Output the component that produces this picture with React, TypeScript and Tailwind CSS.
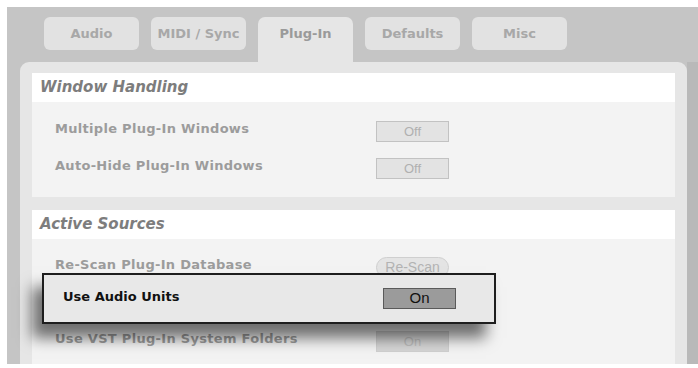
const tabs = ['Audio', 'MIDI / Sync', 'Plug-In', 'Defaults', 'Misc'];

function Toggle({ label, dim }: { label: string; dim?: boolean }) {
  return (
    <div
      className={
        'w-[73px] h-[21px] flex items-center justify-center border text-[13px] ' +
        (dim ? 'bg-[#d6d6d6] border-[#d0d0d0] text-[#bdbdbd]' : 'bg-[#e3e3e3] border-[#c2c2c2] text-[#b0b0b0]')
      }
    >
      {label}
    </div>
  );
}

function Row({ label, children }: { label: string; children: React.ReactNode }) {
  return (
    <div className="flex items-center h-[21px]">
      <div className="w-[321px] text-[13px] font-bold text-[#9c9c9c] font-['DejaVu_Sans',sans-serif] tracking-[0.3px] -mt-[5px]">
        {label}
      </div>
      {children}
    </div>
  );
}

function SectionHeader({ title }: { title: string }) {
  return (
    <div className="bg-white h-[29px] flex items-center pl-[8px] text-[15px] font-bold italic text-[#7d7d7d] font-['DejaVu_Sans',sans-serif]">
      {title}
    </div>
  );
}

export default function App() {
  return (
    <div className="w-[698px] h-[368px] bg-white pt-[7px] pl-[7px] font-['Liberation_Sans',Arial,sans-serif] overflow-hidden">
      <div className="h-[357px] bg-[#c5c5c5] flex flex-col">
        {/* tabs */}
        <div className="flex items-start gap-[12px] pl-[37px] pt-[10px] h-[55px] font-['DejaVu_Sans',sans-serif]">
          {tabs.map((t) => {
            const active = t === 'Plug-In';
            return (
              <div
                key={t}
                className={
                  'w-[95px] flex justify-center text-[13px] font-bold ' +
                  (active
                    ? 'h-[45px] bg-[#e6e6e6] rounded-t-[7px] pt-[7px] text-[#9a9a9a]'
                    : 'h-[33px] bg-[#e2e2e2] rounded-[6px] items-center text-[#a8a8a8]')
                }
              >
                {t}
              </div>
            );
          })}
        </div>

        {/* panel */}
        <div className="flex flex-1">
          <div className="relative ml-[13px] w-[667px] bg-[#e6e6e6] rounded-t-[9px] px-[12px] pt-[11px] flex flex-col">
            <SectionHeader title="Window Handling" />
            <div className="bg-[#f3f3f3] h-[95px] pl-[23px] pt-[19px] flex flex-col gap-[16px]">
              <Row label="Multiple Plug-In Windows">
                <Toggle label="Off" />
              </Row>
              <Row label="Auto-Hide Plug-In Windows">
                <Toggle label="Off" />
              </Row>
            </div>

            <div className="h-[13px]" />
            <SectionHeader title="Active Sources" />
            <div className="bg-[#f3f3f3] flex-1 pl-[23px] pt-[18px] flex flex-col gap-[16px]">
              <Row label="Re-Scan Plug-In Database">
                <div className="w-[73px] h-[21px] rounded-full border border-[#cfcfcf] bg-[#e4e4e4] text-[#b3b3b3] text-[14px] flex items-center justify-center">
                  Re-Scan
                </div>
              </Row>
              {/* row behind the callout */}
              <div className="h-[21px]" />
              <Row label="Use VST Plug-In System Folders">
                <Toggle label="On" dim />
              </Row>
            </div>

            {/* highlighted callout */}
            <div className="absolute left-[22px] top-[211px] w-[454px] h-[51px] bg-[#e8e8e8] border-2 border-[#1e1e1e] shadow-[-10px_14px_14px_rgba(0,0,0,0.55)] flex items-center pl-[19px]">
              <div className="w-[320px] text-[13px] font-bold text-[#111] font-['DejaVu_Sans',sans-serif] -mt-[3px]">
                Use Audio Units
              </div>
              <div className="w-[73px] h-[21px] bg-[#9b9b9b] border border-[#5a5a5a] flex items-center justify-center text-[15px] text-[#111]">
                On
              </div>
            </div>
          </div>
          <div className="flex-1 bg-[#b9b9b9]" />
        </div>
      </div>
    </div>
  );
}
